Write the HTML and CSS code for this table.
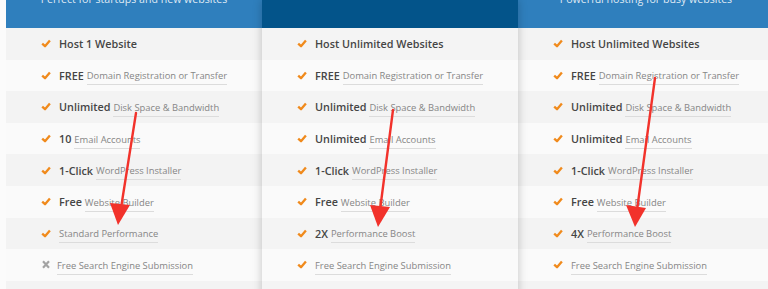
FILE: index.html
```html
<!DOCTYPE html>
<html>
<head>
<meta charset="utf-8">
<link rel="stylesheet" href="styles.css">
</head>
<body>
<div class="page">
  <div class="plans">
    <div class="plan">
      <div class="plan-head"><span class="tagline">Perfect for startups and new websites</span></div>
      <ul class="features">
        <li class="row"><span class="ic check"></span><b>Host 1 Website</b></li>
        <li class="row"><span class="ic check"></span><b>FREE</b><span class="desc">Domain Registration or Transfer</span></li>
        <li class="row"><span class="ic check"></span><b>Unlimited</b><span class="desc">Disk Space &amp; Bandwidth</span></li>
        <li class="row"><span class="ic check"></span><b>10</b><span class="desc">Email Accounts</span></li>
        <li class="row"><span class="ic check"></span><b>1-Click</b><span class="desc">WordPress Installer</span></li>
        <li class="row"><span class="ic check"></span><b>Free</b><span class="desc">Website Builder</span></li>
        <li class="row"><span class="ic check"></span><span class="desc">Standard Performance</span></li>
        <li class="row"><span class="ic cross"></span><span class="desc">Free Search Engine Submission</span></li>
        <li class="row"></li>
      </ul>
    </div>
    <div class="plan featured">
      <div class="plan-head"></div>
      <ul class="features">
        <li class="row"><span class="ic check"></span><b>Host Unlimited Websites</b></li>
        <li class="row"><span class="ic check"></span><b>FREE</b><span class="desc">Domain Registration or Transfer</span></li>
        <li class="row"><span class="ic check"></span><b>Unlimited</b><span class="desc">Disk Space &amp; Bandwidth</span></li>
        <li class="row"><span class="ic check"></span><b>Unlimited</b><span class="desc">Email Accounts</span></li>
        <li class="row"><span class="ic check"></span><b>1-Click</b><span class="desc">WordPress Installer</span></li>
        <li class="row"><span class="ic check"></span><b>Free</b><span class="desc">Website Builder</span></li>
        <li class="row"><span class="ic check"></span><b>2X</b><span class="desc">Performance Boost</span></li>
        <li class="row"><span class="ic check"></span><span class="desc">Free Search Engine Submission</span></li>
        <li class="row"></li>
      </ul>
    </div>
    <div class="plan">
      <div class="plan-head"><span class="tagline">Powerful hosting for busy websites</span></div>
      <ul class="features">
        <li class="row"><span class="ic check"></span><b>Host Unlimited Websites</b></li>
        <li class="row"><span class="ic check"></span><b>FREE</b><span class="desc">Domain Registration or Transfer</span></li>
        <li class="row"><span class="ic check"></span><b>Unlimited</b><span class="desc">Disk Space &amp; Bandwidth</span></li>
        <li class="row"><span class="ic check"></span><b>Unlimited</b><span class="desc">Email Accounts</span></li>
        <li class="row"><span class="ic check"></span><b>1-Click</b><span class="desc">WordPress Installer</span></li>
        <li class="row"><span class="ic check"></span><b>Free</b><span class="desc">Website Builder</span></li>
        <li class="row"><span class="ic check"></span><b>4X</b><span class="desc">Performance Boost</span></li>
        <li class="row"><span class="ic check"></span><span class="desc">Free Search Engine Submission</span></li>
        <li class="row"></li>
      </ul>
    </div>
  </div>
  <svg class="arrows" width="768" height="289" viewBox="0 0 768 289">
    <g stroke="#f2322b" stroke-width="2.4" stroke-linecap="round" fill="none">
      <line x1="136" y1="113" x2="121" y2="208"/>
      <line x1="393" y1="110" x2="380" y2="210"/>
      <line x1="655" y1="78" x2="637" y2="210"/>
    </g>
    <g fill="#f2322b">
      <polygon points="118,225 110,203 130,205"/>
      <polygon points="378,227 370,205 390,207"/>
      <polygon points="635,227 626,205 646,208"/>
    </g>
  </svg>
</div>
</body>
</html>
```
FILE: styles.css
```css
html, body {
  margin: 0;
  padding: 0;
  background: #fbfbfb;
}
body {
  font-family: "Open Sans", "Liberation Sans", sans-serif;
  width: 768px;
  height: 289px;
  overflow: hidden;
}
.page {
  position: relative;
  width: 768px;
  height: 289px;
  overflow: hidden;
}
.plans {
  display: grid;
  grid-template-columns: 256px 256px 256px;
  padding-left: 6px;
}
.plan {
  position: relative;
  background: #fafafa;
}
.plan.featured {
  z-index: 2;
  box-shadow: 0 0 9px rgba(0, 0, 0, 0.22);
}
.plan-head {
  height: 28px;
  background: #2f7fbd;
  display: flex;
  justify-content: center;
  align-items: flex-start;
}
.featured .plan-head {
  background: #03548a;
}
.tagline {
  margin-top: -8px;
  font-size: 10.6px;
  line-height: 14px;
  color: rgba(255, 255, 255, 0.85);
}
.features {
  list-style: none;
  margin: 0;
  padding: 0;
}
.row {
  height: 31.6px;
  display: flex;
  align-items: center;
  gap: 3px;
  padding-left: 35px;
  box-sizing: border-box;
  background: #fafafa;
}
.row:nth-child(odd) {
  background: #f3f3f3;
}
.featured .row:nth-child(odd) {
  background: #f4f4f4;
}
.ic {
  width: 10px;
  height: 9px;
  margin-right: 5px;
  flex: none;
}
.check {
  background: url("data:image/svg+xml;utf8,<svg xmlns='http://www.w3.org/2000/svg' viewBox='0 0 10 9'><path d='M1.2 4.6 L4 7.2 L8.9 1.4' fill='none' stroke='%23f08a1c' stroke-width='2.3' stroke-linejoin='round'/></svg>") no-repeat center;
}
.cross {
  background: url("data:image/svg+xml;utf8,<svg xmlns='http://www.w3.org/2000/svg' viewBox='0 0 10 9'><path d='M2 1.3 L8 7.7 M8 1.3 L2 7.7' fill='none' stroke='%23a3a3a3' stroke-width='2.2'/></svg>") no-repeat center;
}
.cross + .desc {
  margin-left: -2px;
}
b {
  font-weight: 600;
  font-size: 10.8px;
  color: #454545;
}
.desc {
  font-size: 9.4px;
  color: #868686;
  padding-bottom: 2px;
  margin-top: 4px;
  border-bottom: 1px solid #dcdcdc;
}
.arrows {
  position: absolute;
  left: 0;
  top: 0;
  z-index: 5;
  pointer-events: none;
}
```
